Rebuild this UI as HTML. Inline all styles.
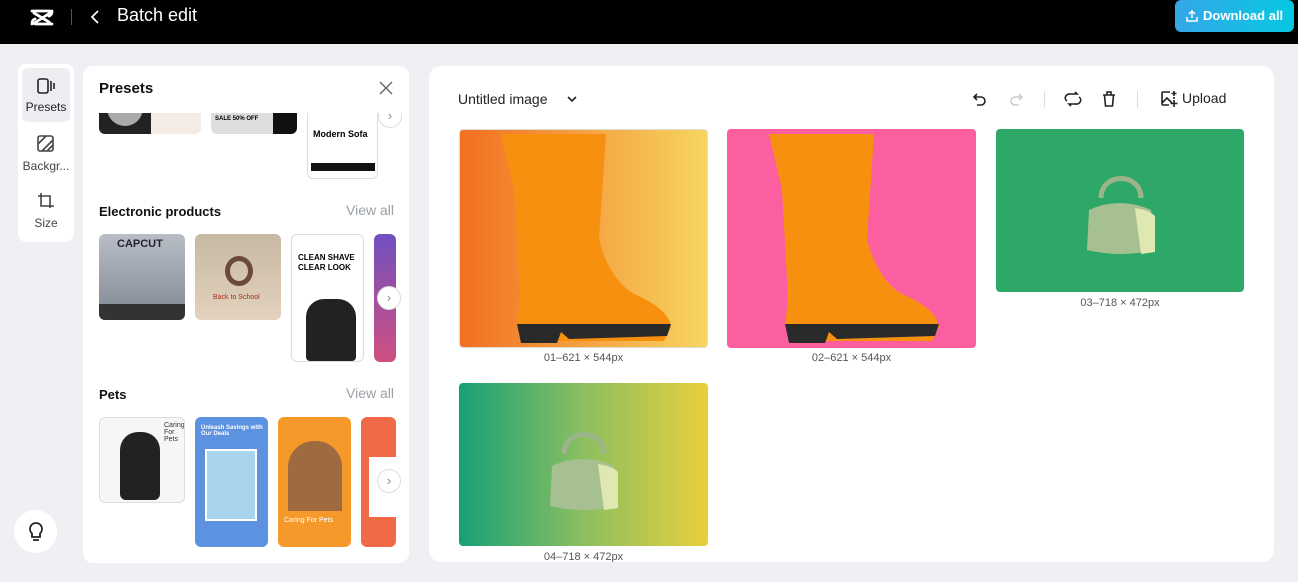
<!DOCTYPE html>
<html><head><meta charset="utf-8"><style>
*{box-sizing:border-box;margin:0;padding:0}
body{width:1298px;height:582px;overflow:hidden;background:#eef0f4;font-family:"Liberation Sans",sans-serif;position:relative}
.hdr{position:absolute;left:0;top:0;width:1298px;height:44px;background:#000}
.abs{position:absolute}
.card{position:absolute;border-radius:6px;overflow:hidden}
.lbl{position:absolute;font-size:11px;color:#555;text-align:center}
.va{position:absolute;font-size:14px;color:#9aa0a6}
.h{position:absolute;font-size:14px;font-weight:bold;color:#111}
.arrow{position:absolute;width:24px;height:24px;border-radius:50%;background:#fff;border:1px solid #ddd;color:#888;font-size:13px;text-align:center;line-height:22px}
</style></head><body>
<div class="hdr">
<svg class="abs" style="left:29px;top:6px" width="26" height="22" viewBox="0 0 26 22"><path d="M3 5H20Q23 5 21 7L7 16Q4 18 7 18H23M3 18Q3 14 6 13M23 5Q23 9 20 10M5 7L20 16Q22 18 20 18" stroke="#fff" stroke-width="2.8" fill="none" stroke-linejoin="round" stroke-linecap="round"/></svg>
<div class="abs" style="left:71px;top:9px;width:1px;height:16px;background:#555"></div>
<svg class="abs" style="left:90px;top:9px" width="10" height="16"><path d="M8 2L2 8l6 6" stroke="#fff" stroke-width="1.8" fill="none"/></svg>
<div class="abs" style="left:117px;top:5px;color:#fff;font-size:18px">Batch edit</div>
<div class="abs" style="left:1175px;top:0;width:119px;height:32px;border-radius:6px;background:linear-gradient(90deg,#35a7e8,#06c8e0);color:#fff;font-weight:bold;font-size:13px;line-height:31px;padding-left:28px">Download all</div>
<svg class="abs" style="left:1185px;top:9px" width="14" height="14"><path d="M7 9V2M4 5l3-3 3 3M2 8v4h10V8" stroke="#fff" stroke-width="1.5" fill="none"/></svg>
</div>
<!-- toolbar -->
<div class="abs" style="left:18px;top:64px;width:56px;height:178px;background:#fff;border-radius:8px"></div>
<div class="abs" style="left:22px;top:68px;width:48px;height:54px;background:#eceef1;border-radius:6px"></div>
<svg class="abs" style="left:36px;top:77px" width="20" height="18"><rect x="2" y="2" width="10" height="14" rx="2" stroke="#222" stroke-width="1.6" fill="none"/><path d="M15 4v10M18 6v6" stroke="#222" stroke-width="1.6"/></svg>
<div class="abs" style="left:22px;top:100px;width:48px;text-align:center;font-size:12px;color:#222">Presets</div>
<svg class="abs" style="left:37px;top:135px" width="18" height="18"><rect x="1" y="1" width="15" height="15" rx="2" stroke="#444" stroke-width="1.6" fill="none"/><path d="M1 9l8-8M5 16L16 5M10 16l6-6" stroke="#444" stroke-width="1.6"/></svg>
<div class="abs" style="left:18px;top:159px;width:56px;text-align:center;font-size:12px;color:#444">Backgr...</div>
<svg class="abs" style="left:37px;top:192px" width="18" height="18"><path d="M4 1v13h13M1 4h12v12" stroke="#444" stroke-width="1.6" fill="none"/></svg>
<div class="abs" style="left:18px;top:216px;width:56px;text-align:center;font-size:12px;color:#444">Size</div>
<div class="abs" style="left:14px;top:510px;width:43px;height:43px;border-radius:50%;background:#fff"></div>
<svg class="abs" style="left:27px;top:521px" width="18" height="22"><path d="M9 2a6 6 0 0 0-4 10.5V16h8v-3.5A6 6 0 0 0 9 2zM6 19h6" stroke="#222" stroke-width="1.8" fill="none"/></svg>
<!-- presets panel -->
<div class="abs" style="left:83px;top:66px;width:326px;height:497px;background:#fff;border-radius:10px;overflow:hidden">
 <div class="card" style="left:16px;top:36px;width:102px;height:32px;background:#f3ebe4"><div class="abs" style="left:0;top:0;width:52px;height:32px;background:#222"></div><div class="abs" style="left:8px;top:0;width:36px;height:24px;border-radius:0 0 18px 18px;background:#aaa"></div></div>
 <div class="card" style="left:128px;top:36px;width:86px;height:32px;background:#ddd"><div class="abs" style="left:62px;top:0;width:24px;height:32px;background:#111"></div><div class="abs" style="left:4px;top:14px;font-size:6px;font-weight:bold">SALE 50% OFF</div></div>
 <div class="card" style="left:224px;top:36px;width:71px;height:77px;background:#fff;border:1px solid #ddd"><div class="abs" style="left:5px;top:26px;font-size:9px;font-weight:bold">Modern Sofa</div><div class="abs" style="left:3px;top:60px;width:64px;height:8px;background:#111"></div></div>
 <div class="arrow" style="left:295px;top:38px">›</div>
 <div class="abs" style="left:0;top:0;width:326px;height:47px;background:#fff"></div>
 <div class="abs" style="left:16px;top:14px;font-size:15px;font-weight:bold;color:#111">Presets</div>
 <svg class="abs" style="left:296px;top:15px" width="14" height="14"><path d="M1 1l12 12M13 1L1 13" stroke="#666" stroke-width="1.4"/></svg>
 <div class="h" style="left:16px;top:138px;font-size:13px">Electronic products</div><div class="va" style="left:263px;top:136px">View all</div>
 <div class="card" style="left:16px;top:168px;width:86px;height:86px;background:linear-gradient(#b9bec6,#7f8793)"><div class="abs" style="left:18px;top:4px;font-size:11px;font-weight:bold;color:#223">CAPCUT</div><div class="abs" style="left:0;top:70px;width:86px;height:16px;background:#333"></div></div>
 <div class="card" style="left:112px;top:168px;width:86px;height:86px;background:linear-gradient(#c7b9a3,#e3d2bd)"><div class="abs" style="left:30px;top:22px;width:28px;height:30px;border-radius:50%;border:5px solid #6b4a3a"></div><div class="abs" style="left:18px;top:60px;font-size:7px;color:#a03020">Back to School</div></div>
 <div class="card" style="left:208px;top:168px;width:73px;height:128px;background:#fff;border:1px solid #ddd"><div class="abs" style="left:6px;top:18px;font-size:8px;font-weight:bold;line-height:10px">CLEAN SHAVE<br>CLEAR LOOK</div><div class="abs" style="left:14px;top:64px;width:50px;height:62px;border-radius:18px 18px 4px 4px;background:#222"></div></div>
 <div class="card" style="left:291px;top:168px;width:22px;height:128px;background:linear-gradient(#7050c0,#d05080)"></div>
 <div class="arrow" style="left:294px;top:220px">›</div>
 <div class="h" style="left:16px;top:321px;font-size:13px">Pets</div><div class="va" style="left:263px;top:319px">View all</div>
 <div class="card" style="left:16px;top:351px;width:86px;height:86px;background:#f6f6f6;border:1px solid #ddd"><div class="abs" style="left:20px;top:14px;width:40px;height:68px;background:#222;border-radius:18px 18px 6px 6px"></div><div class="abs" style="left:64px;top:4px;font-size:7px;color:#333">Caring<br>For<br>Pets</div></div>
 <div class="card" style="left:112px;top:351px;width:73px;height:130px;background:#5c92e0"><div class="abs" style="left:6px;top:8px;font-size:6px;font-weight:bold;color:#fff">Unleash Savings with Our Deals</div><div class="abs" style="left:10px;top:32px;width:52px;height:72px;background:#a8d4ee;border:2px solid #fff"></div></div>
 <div class="card" style="left:195px;top:351px;width:73px;height:130px;background:#f59a2a"><div class="abs" style="left:10px;top:24px;width:54px;height:70px;border-radius:26px 26px 0 0;background:#a06a40"></div><div class="abs" style="left:6px;top:100px;font-size:7px;color:#fff">Caring For Pets</div></div>
 <div class="card" style="left:278px;top:351px;width:35px;height:130px;background:#f06a48"><div class="abs" style="left:8px;top:40px;width:27px;height:60px;background:#fff"></div></div>
 <div class="arrow" style="left:294px;top:403px">›</div>
</div>
<!-- main -->
<div class="abs" style="left:429px;top:66px;width:845px;height:496px;background:#fff;border-radius:12px;overflow:hidden">
 <div class="abs" style="left:29px;top:25px;font-size:14px;color:#222">Untitled image</div>
 <svg class="abs" style="left:137px;top:28px" width="12" height="10"><path d="M2 3l4 4 4-4" stroke="#222" stroke-width="1.6" fill="none"/></svg>
 <svg class="abs" style="left:543px;top:25px" width="16" height="16"><path d="M5 3L2 6l3 3M2 6h7a4 4 0 0 1 0 8H5" stroke="#222" stroke-width="1.6" fill="none"/></svg>
 <svg class="abs" style="left:579px;top:25px" width="16" height="16"><path d="M11 3l3 3-3 3M14 6H7a4 4 0 0 0 0 8h4" stroke="#ccc" stroke-width="1.6" fill="none"/></svg>
 <div class="abs" style="left:615px;top:25px;width:1px;height:17px;background:#ddd"></div>
 <svg class="abs" style="left:634px;top:25px" width="20" height="16"><path d="M4 10a5 4 0 0 1 4-7h6l-2-2M16 6a5 4 0 0 1-4 7H6l2 2" stroke="#222" stroke-width="1.6" fill="none"/></svg>
 <svg class="abs" style="left:672px;top:24px" width="16" height="18"><path d="M2 5h12M6 5V2h4v3M3.5 5l1 11h7l1-11" stroke="#222" stroke-width="1.6" fill="none"/></svg>
 <div class="abs" style="left:708px;top:25px;width:1px;height:17px;background:#ddd"></div>
 <svg class="abs" style="left:731px;top:24px" width="18" height="18"><path d="M10 2H3a1 1 0 0 0-1 1v11a1 1 0 0 0 1 1h6M14 9V7M2 13l5-5 5 5" stroke="#222" stroke-width="1.6" fill="none"/><path d="M14 10v7M10.5 13.5h7M14 1v5M11.5 3.5h5" stroke="#222" stroke-width="1.6"/></svg>
 <div class="abs" style="left:753px;top:24px;font-size:14px;color:#222">Upload</div>
 <!-- images -->
 <div class="card" style="left:30px;top:63px;width:249px;height:219px;background:linear-gradient(90deg,#f26f22,#f7d560);border-radius:4px;border:1px solid #ddd"></div>
 <div class="card" style="left:298px;top:63px;width:249px;height:219px;background:#fb5fa0;border-radius:4px"></div>
 <div class="card" style="left:567px;top:63px;width:248px;height:163px;background:#2ea868;border-radius:4px"></div>
 <div class="card" style="left:30px;top:317px;width:249px;height:163px;background:linear-gradient(90deg,#17a077,#8cbf60,#e8cf3c);border-radius:4px"></div>
 <!-- boots -->
 <svg class="abs" style="left:30px;top:63px" width="249" height="219"><path d="M42 5L147 5L140 110Q150 150 175 165Q210 180 212 198L205 212L62 212L58 195Q62 170 60 150L55 60Z" fill="#f7900f"/><path d="M58 195L212 195L208 207L110 210L102 203L98 214L62 214Z" fill="#2a2a2a"/></svg>
 <svg class="abs" style="left:298px;top:63px" width="249" height="219"><path d="M42 5L147 5L140 110Q150 150 175 165Q210 180 212 198L205 212L62 212L58 195Q62 170 60 150L55 60Z" fill="#f7900f"/><path d="M58 195L212 195L208 207L110 210L102 203L98 214L62 214Z" fill="#2a2a2a"/></svg>
 <!-- bags -->
 <svg class="abs" style="left:654px;top:102px" width="75" height="90"><path d="M18 30c0-26 40-26 40 0" stroke="#9cb48a" stroke-width="5" fill="none"/><path d="M6 42q30-14 62 0l4 40q-34 8-68 0z" fill="#a7c092"/><path d="M52 40q14 2 20 8l0 36-14 2z" fill="#dfe8b0"/></svg>
 <svg class="abs" style="left:117px;top:358px" width="75" height="90"><path d="M18 30c0-26 40-26 40 0" stroke="#9cb48a" stroke-width="5" fill="none"/><path d="M6 42q30-14 62 0l4 40q-34 8-68 0z" fill="#a7c092"/><path d="M52 40q14 2 20 8l0 36-14 2z" fill="#dfe8b0"/></svg>
 <div class="lbl" style="left:30px;top:286px;width:249px">01–621 × 544px</div>
 <div class="lbl" style="left:298px;top:286px;width:249px">02–621 × 544px</div>
 <div class="lbl" style="left:567px;top:231px;width:248px">03–718 × 472px</div>
 <div class="lbl" style="left:30px;top:485px;width:249px">04–718 × 472px</div>
</div>
</body></html>
